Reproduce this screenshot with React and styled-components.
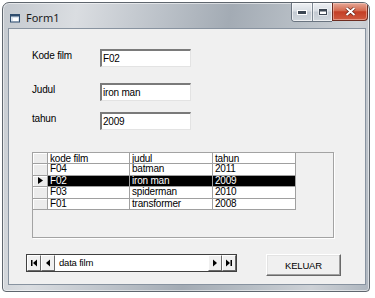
import React from 'react'
import styled, { createGlobalStyle } from 'styled-components'

const GlobalStyle = createGlobalStyle`
  html, body {
    margin: 0;
    padding: 0;
    background: #fff;
  }
  body {
    font-family: 'Liberation Sans', Arial, sans-serif;
  }
`

const Window = styled.div`
  margin: 2px 0 0 2px;
  width: 368px;
  height: 290px;
  box-sizing: border-box;
  border: 1px solid #5f666e;
  border-radius: 7px 7px 4px 4px;
  background: linear-gradient(100deg, #c4c9cf 0%, #dadde1 18%, #bcc2c9 38%, #a3abb4 55%, #b8bfc6 72%, #cdd1d6 86%, #aeb6bf 100%);
  box-shadow: inset 0 0 0 1px rgba(255, 255, 255, 0.55);
  display: flex;
  flex-direction: column;
  overflow: hidden;
`

const TitleBar = styled.div`
  height: 25px;
  display: flex;
  align-items: flex-start;
  justify-content: space-between;
  flex-shrink: 0;
`

const TitleLeft = styled.div`
  display: flex;
  align-items: center;
  gap: 5px;
  padding: 7px 0 0 7px;
  font-family: 'Noto Sans', 'Liberation Sans', sans-serif;
  font-size: 11px;
  color: #1a1a1a;
`

const CaptionButtons = styled.div`
  display: flex;
  margin-right: 1px;
`

const CaptionGroup = styled.div`
  display: flex;
  height: 18px;
  border: 1px solid #6a7480;
  border-top: none;
  border-right: none;
  border-radius: 0 0 0 4px;
  overflow: hidden;
`

const CaptionBtn = styled.div`
  width: ${p => p.$w}px;
  height: 18px;
  display: flex;
  align-items: center;
  justify-content: center;
  box-sizing: border-box;
  border-left: ${p => (p.$divider ? '1px solid #7d8893' : 'none')};
  background: linear-gradient(#eef1f4 0%, #d9dee4 45%, #c3cad2 50%, #d2d8de 100%);
  box-shadow: inset 0 0 0 1px rgba(255, 255, 255, 0.6);
`

const CloseBtn = styled.div`
  width: 36px;
  height: 18px;
  box-sizing: border-box;
  display: flex;
  align-items: center;
  justify-content: center;
  border: 1px solid #6d2c20;
  border-top: none;
  border-radius: 0 0 4px 0;
  background: linear-gradient(#e6a897 0%, #d46a50 45%, #c43e25 52%, #cf5b40 100%);
  box-shadow: inset 0 0 0 1px rgba(255, 220, 210, 0.45);
`

const Client = styled.div`
  flex: 1;
  margin: 0 3px 6px 5px;
  background: #f0f0f0;
  border: 1px solid #8893a0;
  display: flex;
  flex-direction: column;
  color: #000;
`

const Fields = styled.div`
  display: flex;
  flex-direction: column;
  padding: 20px 0 0 23px;
`

const FieldRow = styled.div`
  display: flex;
  align-items: flex-start;
  margin-top: ${p => p.$top}px;
`

const Label = styled.div`
  width: 68px;
  font-size: 10px;
  line-height: 13px;
  letter-spacing: -0.2px;
`

const TextBox = styled.div`
  width: 91px;
  height: 18px;
  box-sizing: border-box;
  background: #fff;
  border-style: solid;
  border-width: 2px 1px 1px 2px;
  border-color: #7a7a7a #e3e3e3 #e3e3e3 #7a7a7a;
  padding: 1px 0 0 1px;
  font-size: 10px;
  line-height: 13px;
  letter-spacing: -0.2px;
`

const GridBox = styled.div`
  margin: 22px 0 0 23px;
  width: 302px;
  height: 86px;
  box-sizing: border-box;
  border: 1px solid #a3a3a3;
  box-shadow: 1px 1px 0 #fff;
`

const Table = styled.div`
  display: grid;
  grid-template-columns: 15px 82px 83px 83px;
  grid-template-rows: 11px repeat(4, 11.5px);
  width: max-content;
`

const Cell = styled.div`
  box-sizing: border-box;
  border-right: 1px solid #a0a0a0;
  border-bottom: 1px solid #a0a0a0;
  padding-left: 2px;
  font-size: 10px;
  line-height: 10px;
  letter-spacing: -0.2px;
  white-space: nowrap;
  overflow: hidden;
  background: ${p => (p.$selected ? '#000' : '#fff')};
  color: ${p => (p.$selected ? '#fff' : '#000')};
`

const HeaderCell = styled(Cell)`
  background: #fff;
  line-height: 11px;
`

const RowHead = styled.div`
  box-sizing: border-box;
  border-right: 1px solid #a0a0a0;
  border-bottom: 1px solid #a0a0a0;
  background: #ececec;
  box-shadow: inset 1px 1px 0 #fff;
  display: flex;
  align-items: center;
  justify-content: center;
`

const BottomRow = styled.div`
  display: flex;
  align-items: flex-start;
  margin: 16px 0 0 17px;
  gap: 29px;
`

const DataControl = styled.div`
  width: 211px;
  height: 18px;
  box-sizing: border-box;
  display: flex;
  border: 1px solid #404040;
  background: #fff;
`

const NavBtn = styled.div`
  width: 14px;
  height: 16px;
  box-sizing: border-box;
  background: #f0f0f0;
  border-style: solid;
  border-width: 1px;
  border-color: #fff #696969 #696969 #fff;
  display: flex;
  align-items: center;
  justify-content: center;
`

const Caption = styled.div`
  flex: 1;
  padding-left: 4px;
  font-size: 9.5px;
  line-height: 16px;
  letter-spacing: -0.2px;
`

const Button = styled.div`
  width: 75px;
  height: 22px;
  box-sizing: border-box;
  background: #f0f0f0;
  border-style: solid;
  border-width: 1px;
  border-color: #fff #696969 #696969 #fff;
  box-shadow: inset -1px -1px 0 #a0a0a0, inset 1px 1px 0 #e3e3e3;
  display: flex;
  align-items: center;
  justify-content: center;
  font-size: 9.5px;
  letter-spacing: -0.2px;
`

const FormIcon = () => (
  <svg width="11" height="10" viewBox="0 0 11 10">
    <rect x="0.5" y="1.5" width="9" height="7.5" fill="#dbe4ee" stroke="#2f4d6e" />
    <rect x="0" y="1" width="10" height="2.5" fill="#2f4d6e" />
    <path d="M3 5 L8 5 L8 8 L3 8 Z" fill="#fff" />
  </svg>
)

const Tri = ({ dir, bar }) => (
  <svg width="8" height="8" viewBox="0 0 8 8">
    {dir === 'left' ? (
      <>
        {bar && <rect x="1" y="1" width="1.5" height="6" fill="#000" />}
        <path d={bar ? 'M7 0.5 L3 4 L7 7.5 Z' : 'M6 0.5 L2 4 L6 7.5 Z'} fill="#000" />
      </>
    ) : (
      <>
        <path d={bar ? 'M1 0.5 L5 4 L1 7.5 Z' : 'M2 0.5 L6 4 L2 7.5 Z'} fill="#000" />
        {bar && <rect x="5.5" y="1" width="1.5" height="6" fill="#000" />}
      </>
    )}
  </svg>
)

const rows = [
  { kode: 'F04', judul: 'batman', tahun: '2011' },
  { kode: 'F02', judul: 'iron man', tahun: '2009', selected: true },
  { kode: 'F03', judul: 'spiderman', tahun: '2010' },
  { kode: 'F01', judul: 'transformer', tahun: '2008' },
]

export default function App() {
  return (
    <>
      <GlobalStyle />
      <Window>
        <TitleBar>
          <TitleLeft>
            <FormIcon />
            <span>Form1</span>
          </TitleLeft>
          <CaptionButtons>
            <CaptionGroup>
              <CaptionBtn $w={20}>
                <svg width="10" height="6" viewBox="0 0 10 6">
                  <rect x="0.5" y="1.5" width="9" height="4" fill="#3c4652" stroke="#fff" />
                </svg>
              </CaptionBtn>
              <CaptionBtn $w={20} $divider>
                <svg width="10" height="8" viewBox="0 0 10 8">
                  <rect x="0.5" y="0.5" width="9" height="7" fill="#fff" />
                  <rect x="1.5" y="1.5" width="7" height="5" fill="none" stroke="#3c4652" />
                  <rect x="2" y="2" width="6" height="1.5" fill="#3c4652" />
                </svg>
              </CaptionBtn>
            </CaptionGroup>
            <CloseBtn>
              <svg width="11" height="9" viewBox="0 0 11 9">
                <path d="M1.5 1 L9.5 8 M9.5 1 L1.5 8" stroke="#5a1a10" strokeWidth="3.2" />
                <path d="M1.5 1 L9.5 8 M9.5 1 L1.5 8" stroke="#fff" strokeWidth="2" />
              </svg>
            </CloseBtn>
          </CaptionButtons>
        </TitleBar>

        <Client>
          <Fields>
            <FieldRow $top={0}>
              <Label>Kode film</Label>
              <TextBox>F02</TextBox>
            </FieldRow>
            <FieldRow $top={16}>
              <Label>Judul</Label>
              <TextBox>iron man</TextBox>
            </FieldRow>
            <FieldRow $top={11}>
              <Label>tahun</Label>
              <TextBox>2009</TextBox>
            </FieldRow>
          </Fields>

          <GridBox>
            <Table>
              <RowHead />
              <HeaderCell>kode film</HeaderCell>
              <HeaderCell>judul</HeaderCell>
              <HeaderCell>tahun</HeaderCell>
              {rows.map(r => (
                <React.Fragment key={r.kode}>
                  <RowHead>
                    {r.selected && (
                      <svg width="5" height="7" viewBox="0 0 5 7">
                        <path d="M0 0 L5 3.5 L0 7 Z" fill="#000" />
                      </svg>
                    )}
                  </RowHead>
                  <Cell $selected={r.selected}>{r.kode}</Cell>
                  <Cell $selected={r.selected}>{r.judul}</Cell>
                  <Cell $selected={r.selected}>{r.tahun}</Cell>
                </React.Fragment>
              ))}
            </Table>
          </GridBox>

          <BottomRow>
            <DataControl>
              <NavBtn><Tri dir="left" bar /></NavBtn>
              <NavBtn><Tri dir="left" /></NavBtn>
              <Caption>data film</Caption>
              <NavBtn><Tri dir="right" /></NavBtn>
              <NavBtn><Tri dir="right" bar /></NavBtn>
            </DataControl>
            <Button>KELUAR</Button>
          </BottomRow>
        </Client>
      </Window>
    </>
  )
}
